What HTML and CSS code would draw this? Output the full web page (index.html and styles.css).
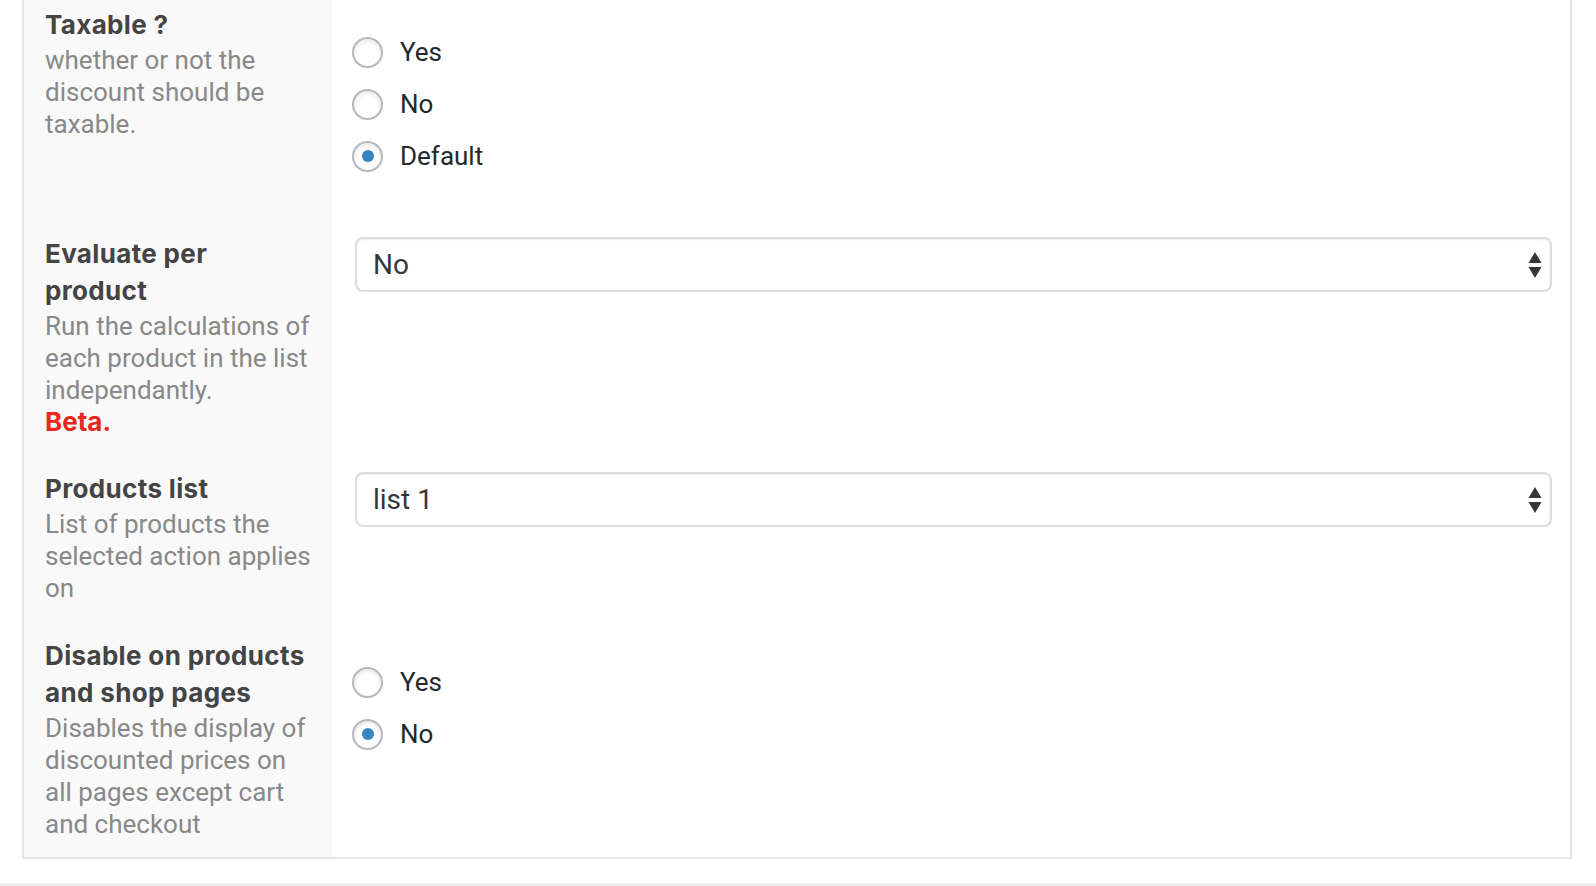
FILE: index.html
```html
<!DOCTYPE html>
<html lang="en">
<head>
<meta charset="utf-8">
<title>Discount settings</title>
<link rel="stylesheet" href="styles.css">
</head>
<body>
<div class="page">
  <div class="form-table">
    <div class="row">
      <div class="th">
        <label class="title">Taxable ?</label>
        <p class="desc">whether or not the discount should be taxable.</p>
      </div>
      <div class="td td-radios">
        <label class="radio"><span class="circle"></span>Yes</label>
        <label class="radio"><span class="circle"></span>No</label>
        <label class="radio"><span class="circle checked"></span>Default</label>
      </div>
    </div>

    <div class="row">
      <div class="th">
        <label class="title">Evaluate per product</label>
        <p class="desc">Run the calculations of each product in the list independantly. <strong class="beta">Beta.</strong></p>
      </div>
      <div class="td td-select">
        <div class="select">
          <span class="select-value">No</span>
          <svg class="select-arrows" width="14" height="28" viewBox="0 0 14 28"><path d="M7 0 L13.5 11 L0.5 11 Z" fill="#32373c"/><path d="M0.5 15 L13.5 15 L7 26 Z" fill="#32373c"/></svg>
        </div>
      </div>
    </div>

    <div class="row">
      <div class="th">
        <label class="title">Products list</label>
        <p class="desc">List of products the selected action applies on</p>
      </div>
      <div class="td td-select">
        <div class="select">
          <span class="select-value">list 1</span>
          <svg class="select-arrows" width="14" height="28" viewBox="0 0 14 28"><path d="M7 0 L13.5 11 L0.5 11 Z" fill="#32373c"/><path d="M0.5 15 L13.5 15 L7 26 Z" fill="#32373c"/></svg>
        </div>
      </div>
    </div>

    <div class="row">
      <div class="th">
        <label class="title">Disable on products and shop pages</label>
        <p class="desc">Disables the display of discounted prices on all pages except cart and checkout</p>
      </div>
      <div class="td td-radios">
        <label class="radio"><span class="circle"></span>Yes</label>
        <label class="radio"><span class="circle checked"></span>No</label>
      </div>
    </div>
  </div>
  <div class="footer-strip"></div>
</div>
</body>
</html>
```

FILE: styles.css
```css
* { box-sizing: border-box; }
html, body { margin: 0; padding: 0; background: #fff; }
body {
  font-family: Roboto, "Liberation Sans", sans-serif;
  font-size: 26px;
  color: #32373c;
}
.page {
  height: 886px;
  overflow: hidden;
  display: flex;
  flex-direction: column;
}
.form-table {
  margin-top: -9px;
  margin-left: 22px;
  width: 1550px;
  border: 2px solid #e5e5e5;
  border-top: none;
  display: flex;
  flex-direction: column;
}
.row {
  display: grid;
  grid-template-columns: 308px 1fr;
}
.th {
  background: #f9f9f9;
  padding: 15px 20px 17px 21px;
}
.row + .row .th { padding-top: 15.5px; }
.title {
  display: block;
  font-family: Inter, Roboto, sans-serif;
  font-weight: 700;
  letter-spacing: 0.35px;
  color: #444;
  line-height: 37.7px;
}
.desc {
  margin: 0;
  color: #888;
  line-height: 32px;
}
.beta {
  display: block;
  font-family: Inter, Roboto, sans-serif;
  color: #e8281e;
  font-weight: 700;
}
.td { background: #fff; }
.td-radios {
  padding: 35px 20px 37px 20px;
  display: flex;
  flex-direction: column;
}
.radio {
  height: 52px;
  display: flex;
  align-items: center;
  color: #23282d;
  line-height: 1;
}
.circle {
  width: 31px;
  height: 31px;
  border-radius: 50%;
  border: 2px solid #b4b9be;
  background: #fff;
  box-shadow: inset 0 2px 4px rgba(0,0,0,0.1);
  margin-right: 17px;
  display: flex;
  align-items: center;
  justify-content: center;
  flex: none;
}
.circle.checked::before {
  content: "";
  width: 12px;
  height: 12px;
  border-radius: 50%;
  background: #3585c1;
}
.td-select {
  padding: 17.5px 18px 0 23px;
}
.select {
  position: relative;
  height: 55px;
  border: 2px solid #dddddd;
  border-radius: 8px;
  background: #fff;
  box-shadow: inset 0 1px 2px rgba(0,0,0,0.07);
  display: flex;
  align-items: center;
  padding-left: 16px;
  font-size: 28px;
  color: #32373c;
}
.select-arrows {
  position: absolute;
  right: 8px;
  top: 13px;
}
.footer-strip {
  margin-top: 24px;
  flex: 1;
  background: #ececec;
}
```
